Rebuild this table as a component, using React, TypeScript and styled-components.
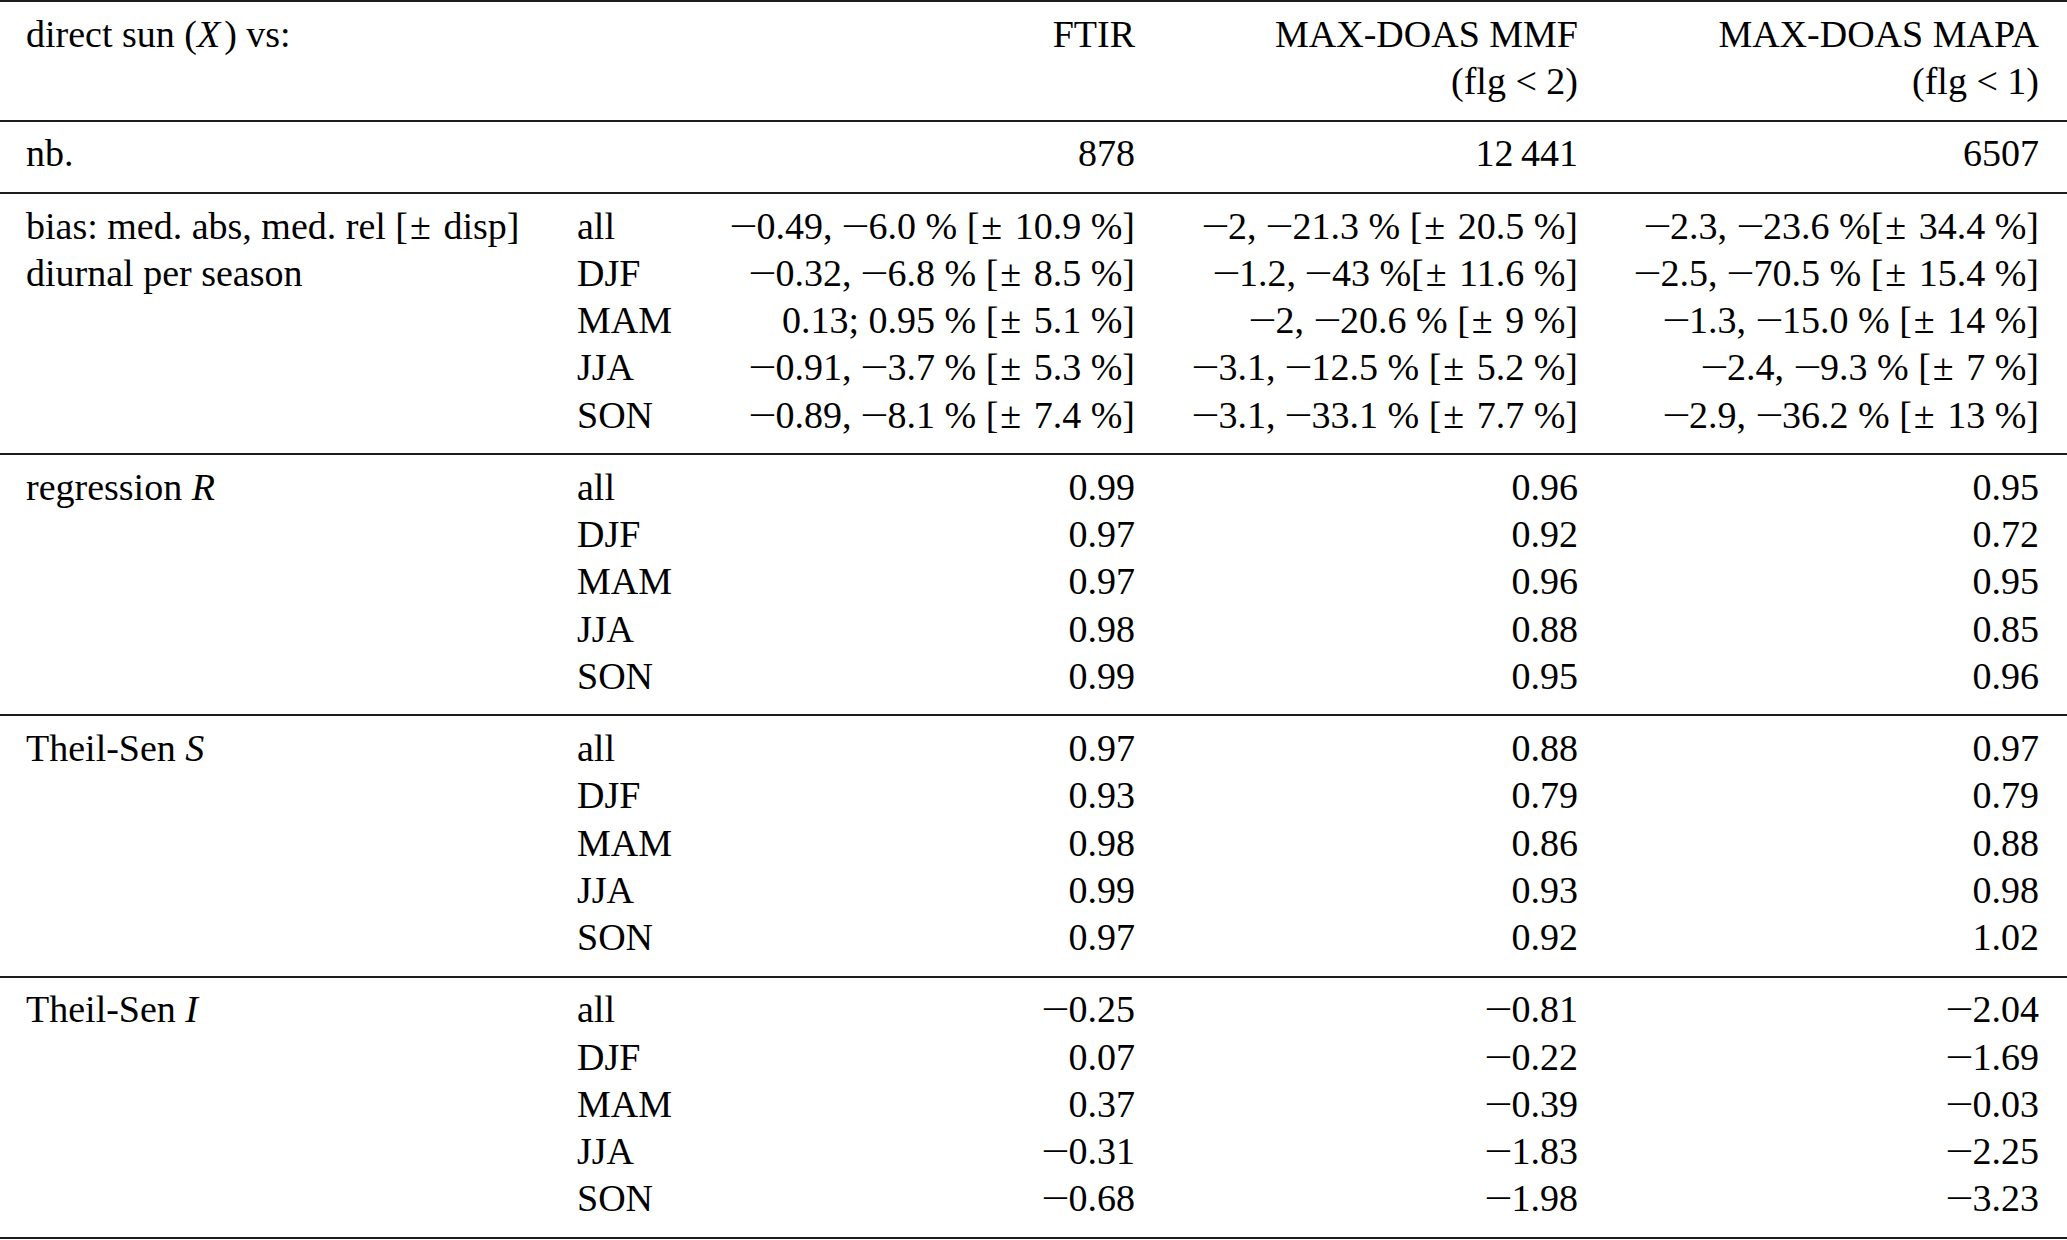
import React from "react";
import styled, { createGlobalStyle } from "styled-components";

const Global = createGlobalStyle`
  html, body { margin: 0; padding: 0; background: #ffffff; }
  body {
    font-family: "Liberation Serif", "Times New Roman", serif;
    color: #000000;
  }
`;

const Table = styled.div`
  width: 2067px;
  border-top: 2px solid #1c1c1c;
  font-size: 38px;
  line-height: 47.2px;
`;

const Section = styled.div`
  display: grid;
  grid-template-columns: 551px 143px 415px 443px 461px;
  grid-auto-rows: 47.2px;
  padding: 8.75px 28px 14.5px 26px;
  border-bottom: 2px solid #1c1c1c;
`;

const Label = styled.div`
  white-space: nowrap;
  text-align: left;
`;

const Season = styled.div`
  white-space: nowrap;
  text-align: left;
`;

const Num = styled.div`
  white-space: nowrap;
  text-align: right;
`;

const Var = styled.i<{ $gap?: number }>`
  font-style: italic;
  padding-right: ${(p) => p.$gap ?? 0}px;
`;

/* math minus: a longer bar than the text font's, as in the typeset table */
const Minus = styled.span`
  display: inline-block;
  margin-right: 5px;
  transform: scaleX(1.32);
  transform-origin: 2px 50%;
`;

/* plus-minus sign set as a binary operator */
const Pm = styled.span`
  margin: 0 3px 0 2px;
`;

const typeset = (s: string): React.ReactNode => {
  const out: React.ReactNode[] = [];
  let buf = "";
  let k = 0;
  for (const ch of s) {
    if (ch === "−" || ch === "±") {
      if (buf) out.push(buf);
      buf = "";
      out.push(
        ch === "−" ? <Minus key={k++}>−</Minus> : <Pm key={k++}>±</Pm>
      );
    } else {
      buf += ch;
    }
  }
  if (buf) out.push(buf);
  return out;
};

const T = "\u2009";

type Row = [React.ReactNode, string, string, string, string];

const header: Row[] = [
  [
    <>
      direct sun (<Var $gap={4}>X</Var>) vs:
    </>,
    "",
    "FTIR",
    "MAX-DOAS MMF",
    "MAX-DOAS MAPA",
  ],
  ["", "", "", "(flg < 2)", "(flg < 1)"],
];

const nb: Row[] = [["nb.", "", "878", `12${T}441`, "6507"]];

const pct = (a: string, b: string, d: string, sep = " ") =>
  `${a}, ${b} %${sep}[± ${d} %]`;

const bias: Row[] = [
  [
    <>bias: med. abs, med. rel [{typeset("±")} disp]</>,
    "all",
    pct("−0.49", "−6.0", "10.9"),
    pct("−2", "−21.3", "20.5"),
    pct("−2.3", "−23.6", "34.4", ""),
  ],
  [
    "diurnal per season",
    "DJF",
    pct("−0.32", "−6.8", "8.5"),
    pct("−1.2", "−43", "11.6", ""),
    pct("−2.5", "−70.5", "15.4"),
  ],
  [
    "",
    "MAM",
    "0.13; 0.95 % [± 5.1 %]",
    pct("−2", "−20.6", "9"),
    pct("−1.3", "−15.0", "14"),
  ],
  [
    "",
    "JJA",
    pct("−0.91", "−3.7", "5.3"),
    pct("−3.1", "−12.5", "5.2"),
    pct("−2.4", "−9.3", "7"),
  ],
  [
    "",
    "SON",
    pct("−0.89", "−8.1", "7.4"),
    pct("−3.1", "−33.1", "7.7"),
    pct("−2.9", "−36.2", "13"),
  ],
];

const seasons = ["all", "DJF", "MAM", "JJA", "SON"];

const block = (label: React.ReactNode, values: string[][]): Row[] =>
  values.map((v, i) => [i === 0 ? label : "", seasons[i], v[0], v[1], v[2]]);

const regression = block(
  <>
    regression <Var>R</Var>
  </>,
  [
    ["0.99", "0.96", "0.95"],
    ["0.97", "0.92", "0.72"],
    ["0.97", "0.96", "0.95"],
    ["0.98", "0.88", "0.85"],
    ["0.99", "0.95", "0.96"],
  ]
);

const slope = block(
  <>
    Theil-Sen <Var>S</Var>
  </>,
  [
    ["0.97", "0.88", "0.97"],
    ["0.93", "0.79", "0.79"],
    ["0.98", "0.86", "0.88"],
    ["0.99", "0.93", "0.98"],
    ["0.97", "0.92", "1.02"],
  ]
);

const intercept = block(
  <>
    Theil-Sen <Var>I</Var>
  </>,
  [
    ["−0.25", "−0.81", "−2.04"],
    ["0.07", "−0.22", "−1.69"],
    ["0.37", "−0.39", "−0.03"],
    ["−0.31", "−1.83", "−2.25"],
    ["−0.68", "−1.98", "−3.23"],
  ]
);

const sections: Row[][] = [header, nb, bias, regression, slope, intercept];

export default function App() {
  return (
    <>
      <Global />
      <Table>
        {sections.map((rows, si) => (
          <Section key={si}>
            {rows.map((r, ri) => (
              <React.Fragment key={ri}>
                <Label>{r[0]}</Label>
                <Season>{r[1]}</Season>
                <Num>{typeset(r[2])}</Num>
                <Num>{typeset(r[3])}</Num>
                <Num>{typeset(r[4])}</Num>
              </React.Fragment>
            ))}
          </Section>
        ))}
      </Table>
    </>
  );
}
